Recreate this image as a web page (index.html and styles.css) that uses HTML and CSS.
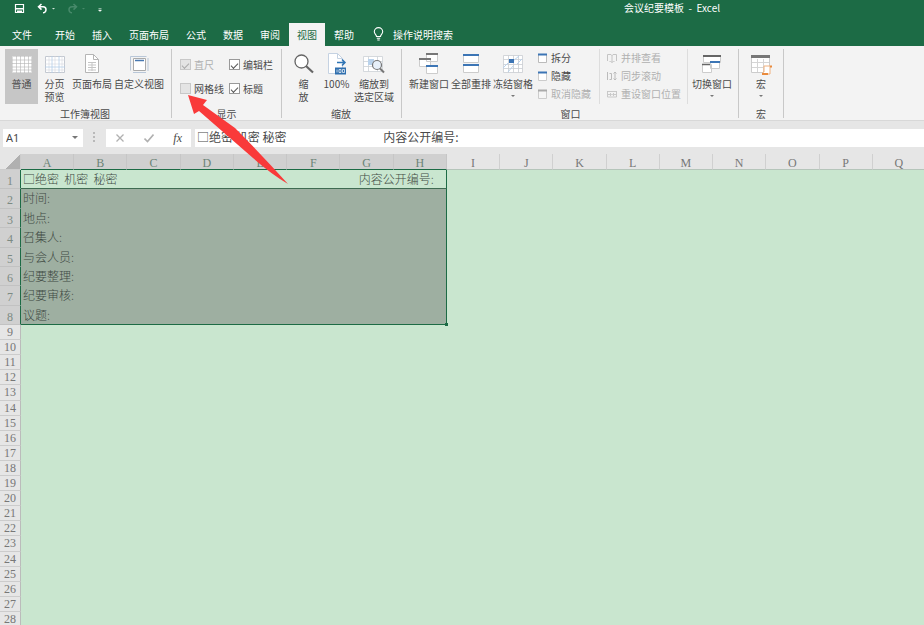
FILE: index.html
```html
<!DOCTYPE html>
<html lang="zh-CN">
<head>
<meta charset="utf-8">
<title>会议纪要模板 - Excel</title>
<link rel="stylesheet" href="styles.css">
</head>
<body>
<header class="titlebar">
  <div class="quick">
    <button aria-label="保存"><svg width="11" height="11" viewBox="0 0 11 11"><path d="M1.500 1.500h8v8h-8z" fill="none" stroke="#fff" stroke-width="1.200"/><path d="M1 5h9v1.500H1zM3 7.500h5V10H3z" fill="#fff"/></svg></button>
    <button aria-label="撤消"><svg width="20" height="11" viewBox="0 0 20 11"><path d="M4.500 1L1.500 3.800l3 2.800M1.500 3.800H6a3 3 0 0 1 0 6" fill="none" stroke="#fff" stroke-width="1.500"/><path d="M15 5h3l-1.500 1.500z" fill="#cfe3d8"/></svg></button>
    <button aria-label="恢复" disabled><svg width="20" height="11" viewBox="0 0 20 11"><path d="M6.500 1l3 2.800-3 2.800M9.500 3.800H5a3 3 0 0 0 0 6" fill="none" stroke="#47896a" stroke-width="1.500"/><path d="M15 5h3l-1.500 1.500z" fill="#47896a"/></svg></button>
    <button aria-label="自定义快速访问工具栏"><svg width="6" height="11" viewBox="0 0 6 11"><path d="M1.500 5.500h3M1.500 7h3L3 8.500z" fill="#fff" stroke="#fff" stroke-width=".5"/></svg></button>
  </div>
  <h1 class="doc">会议纪要模板 &nbsp;- &nbsp;Excel</h1>
</header>
<nav class="tabs">
  <button class="tab file">文件</button>
  <button class="tab">开始</button>
  <button class="tab">插入</button>
  <button class="tab">页面布局</button>
  <button class="tab">公式</button>
  <button class="tab">数据</button>
  <button class="tab">审阅</button>
  <button class="tab active">视图</button>
  <button class="tab">帮助</button>
  <button class="tab tell"><svg width="11" height="14" viewBox="0 0 11 14"><path d="M3.500 9.500C3.500 7.500 1.300 7 1.300 4.800a4.200 4.200 0 0 1 8.400 0C9.700 7 7.500 7.500 7.500 9.500zM3.800 11.300h3.400M4.300 13h2.400" fill="none" stroke="#fff" stroke-width="1.100"/></svg>操作说明搜索</button>
</nav>
<main>
<section class="ribbon">
  <div class="group">
    <div class="tools">
      <button class="big w33 on"><svg width="20" height="20" viewBox="0 0 20 20"><path d="M.5 2.500h19v16H.5z" fill="#fff" stroke="#ddd"/><path d="M0 6h20M0 9.500h20M0 13h20M0 16h20M4.500 2v17M8.500 2v17M12.500 2v17M16.500 2v17" stroke="#b4b4b4" stroke-width=".6"/></svg><span>普通</span></button>
      <button class="big w33"><svg width="20" height="20" viewBox="0 0 20 20"><path d="M.5 2.500h19v16H.5z" fill="#fff" stroke="#c3c8d0"/><path d="M0 6h20M0 10h20M0 16h20M4 2v17M10 2v17M17 2v17" stroke="#d3d7dd" stroke-width=".6"/><path d="M0 13h20M7 2v17M14 2v17" stroke="#b5cee8" stroke-width=".8"/></svg><span>分页<br>预览</span></button>
      <button class="big w42"><svg width="20" height="20" viewBox="0 0 20 20"><path d="M3.500.5h8l5 5v13h-13z" fill="#fff" stroke="#b5b5b5"/><path d="M11.500.5v5h5" fill="none" stroke="#b5b5b5"/><path d="M6 8.500h8M6 11h8M6 13.500h8M6 16h8M10 8v9" stroke="#c5c5c5"/></svg><span>页面布局</span></button>
      <button class="big w52"><svg width="20" height="20" viewBox="0 0 20 20"><path d="M1.500 16.500v-14h16M19 4v13M4 18.500h13" fill="none" stroke="#b9c7d8"/><path d="M4.500 4.500h12v12h-12z" fill="#fff" stroke="#aaa"/><path d="M6 6.500h9" stroke="#4878b0" stroke-width="1.500"/></svg><span>自定义视图</span></button>
    </div>
    <h2>工作簿视图</h2>
  </div>
  <div class="group show">
    <div class="checks">
      <label class="off"><input type="checkbox" checked disabled>直尺</label>
      <label><input type="checkbox" checked>编辑栏</label>
      <label><input type="checkbox" class="hover">网格线</label>
      <label><input type="checkbox" checked>标题</label>
    </div>
    <h2>显示</h2>
  </div>
  <div class="group zoom">
    <div class="tools">
      <button class="big w33"><svg width="20" height="20" viewBox="0 0 20 20"><circle cx="7.500" cy="7.500" r="6.500" fill="#fff" stroke="#666" stroke-width="1.300"/><path d="M12 12l7 6.500" stroke="#666" stroke-width="2.200"/></svg><span>缩<br>放</span></button>
      <button class="big w33"><svg width="20" height="20" viewBox="0 0 20 20"><path d="M1.500-.5h9l5 5v15h-14z" fill="#fff" stroke="#c5d2e2"/><path d="M10.500-.5v5h5" fill="none" stroke="#c5d2e2"/><path d="M10 8.500h8M15 5.500l3 3-3 3" fill="none" stroke="#2f75b5" stroke-width="1.500"/><path d="M8 13.500h11v7H8z" fill="#2f6fae"/><path d="M10 15.500v3M12 15.500h2v3h-2zM15.500 15.500h2v3h-2z" fill="none" stroke="#fff" stroke-width=".7"/></svg><span>100%</span></button>
      <button class="big w42"><svg width="22" height="20" viewBox="0 0 22 20"><path d="M.5 2.500h19v15H.5zM.5 7.500h19M.5 12.500h19M5.500 2.500v15M14.500 2.500v15" fill="#fff" stroke="#cbd0d6" stroke-width=".8"/><path d="M5 5h6v6H5z" fill="#b9d2eb"/><circle cx="14" cy="11" r="4.500" fill="#e7f0f9" stroke="#777" stroke-width="1.200"/><path d="M17 14.500L21 18.500" stroke="#777" stroke-width="2"/></svg><span>缩放到<br>选定区域</span></button>
    </div>
    <h2>缩放</h2>
  </div>
  <div class="group window">
    <div class="tools">
      <button class="big w42"><svg width="20" height="20" viewBox="0 0 20 20"><path d="M7.500-.5h11v8h-11zM.5 4.500h11v8H.5z" fill="#fff" stroke="#ccc"/><path d="M7 0h12M0 5h12" stroke="#777" stroke-width="2"/><path d="M7.500 11.500h11v8h-11z" fill="#fff" stroke="#ccc"/><path d="M7 12h12" stroke="#3c75b5" stroke-width="2"/></svg><span>新建窗口</span></button>
      <button class="big w42"><svg width="20" height="20" viewBox="0 0 20 20"><path d="M2.500.5h15v8h-15zM2.500 10.500h15v8h-15z" fill="#fff" stroke="#ccc"/><path d="M2 1h16M2 11h16" stroke="#3c75b5" stroke-width="2"/></svg><span>全部重排</span></button>
      <button class="big w42"><svg width="22" height="20" viewBox="0 0 22 20"><path d="M1.500 1.500h19v17h-19zM1.500 5.500h19M1.500 10.500h19M1.500 14.500h19M6.500 1.500v17M11.500 1.500v17M16.500 1.500v17" fill="#fff" stroke="#c9cdd2" stroke-width=".8"/><path d="M1 14l5-5M11 7l6-5M6 18l5-6M15 10l5-5" stroke="#b9d2ec"/><path d="M7 5h5v4H7z" fill="#3c75b5"/></svg><span>冻结窗格</span><i class="caret"></i></button>
      <div class="list">
        <button><svg width="9" height="10" viewBox="0 0 9 10"><path d="M.5 1.500h8v8h-8z" fill="#fff" stroke="#bbb"/><path d="M0 1.500h9" stroke="#3c75b5" stroke-width="2"/></svg>拆分</button>
        <button><svg width="9" height="10" viewBox="0 0 9 10"><path d="M.5 1.500h8v8h-8z" fill="#fff" stroke="#ccc"/><path d="M0 1.500h9" stroke="#3c75b5" stroke-width="2"/></svg>隐藏</button>
        <button disabled><svg width="9" height="10" viewBox="0 0 9 10"><path d="M.5 1.500h8v8h-8z" fill="#f5f5f5" stroke="#ccc"/><path d="M0 1.500h9" stroke="#aaa" stroke-width="2"/></svg>取消隐藏</button>
      </div>
      <div class="list ruled">
        <button disabled><svg width="10" height="10" viewBox="0 0 10 10"><path d="M5 2v7M.5 8V1.500H4l1 1 1-1h3.500V8M2.500 8.500h1l1.500 1M7.500 8.500h-1L5 9.500" fill="none" stroke="#c4c4c4"/></svg>并排查看</button>
        <button disabled><svg width="10" height="10" viewBox="0 0 10 10"><path d="M.5 1v8M2.500 2.500h2v6h-2M8 1v8M6.500 2.500L8 1l1.500 1.500M6.500 7.500L8 9l1.500-1.500" fill="none" stroke="#bbb"/></svg>同步滚动</button>
        <button disabled><svg width="10" height="10" viewBox="0 0 10 10"><path d="M.5 2v6M9.500 2v6M.5 2.500h9M.5 8h9M1 5.500h3M6 5.500h3M3 4l1.500 1.500L3 7M7 4L5.500 5.500 7 7" fill="none" stroke="#c4c4c4" stroke-width=".9"/></svg>重设窗口位置</button>
      </div>
      <button class="big w42"><svg width="20" height="20" viewBox="0 0 20 20"><path d="M1.500 1.500h17v7h-17zM.5 10.500h9v8h-9zM8.500 7.500h9v7h-9z" fill="#fff" stroke="#ccc"/><path d="M1 2h18" stroke="#666" stroke-width="2"/><path d="M0 10.500h8" stroke="#666" stroke-width="1.500"/><path d="M8 8h10" stroke="#3c75b5" stroke-width="2"/></svg><span>切换窗口</span><i class="caret"></i></button>
    </div>
    <h2>窗口</h2>
  </div>
  <div class="group macro">
    <div class="tools">
      <button class="big w42"><svg width="22" height="20" viewBox="0 0 22 20"><path d="M1.500 1.500h18v17h-18z" fill="#fff" stroke="#ccc"/><path d="M1 2.500h19" stroke="#777" stroke-width="3"/><path d="M2 8.500h17M2 13.500h17M7.500 5v13M13.500 5v13" stroke="#d5d5d5"/><path d="M14 12h6v8h-7v-2h1z" fill="#fff" stroke="#f0b07c"/><path d="M20 12.500h2M12 20h6" stroke="#e98a3c" stroke-width="2"/></svg><span>宏</span><i class="caret"></i></button>
    </div>
    <h2>宏</h2>
  </div>
</section>
<section class="formula">
  <div class="namebox"><input aria-label="名称框" value="A1"><i class="caret"></i></div>
  <svg class="grip" width="2" height="11" viewBox="0 0 2 11"><path d="M1 0v2M1 4v2M1 8v2" stroke="#aaa" stroke-width="1.500"/></svg>
  <div class="actions">
    <button aria-label="取消"><svg width="10" height="10" viewBox="0 0 10 10"><path d="M1.500 1.500l7 7M8.500 1.500l-7 7" stroke="#b0b0b0" stroke-width="1.300"/></svg></button>
    <button aria-label="输入"><svg width="10" height="10" viewBox="0 0 10 10"><path d="M.5 5.500l3 3 6-7" fill="none" stroke="#b0b0b0" stroke-width="1.600"/></svg></button>
    <button class="fx">fx</button>
  </div>
  <input class="content" aria-label="编辑栏" value="□绝密 机密 秘密                                    内容公开编号:">
</section>
<table class="sheet">
  <thead>
    <tr><th class="corner"></th><th class="sel">A</th><th class="sel">B</th><th class="sel">C</th><th class="sel">D</th><th class="sel">E</th><th class="sel">F</th><th class="sel">G</th><th class="sel">H</th><th>I</th><th>J</th><th>K</th><th>L</th><th>M</th><th>N</th><th>O</th><th>P</th><th>Q</th></tr>
  </thead>
  <tbody class="filled">
    <tr><th>1</th><td class="first"><span>□绝密  机密  秘密</span><span>内容公开编号:</span></td></tr>
    <tr><th>2</th><td>时间:</td></tr>
    <tr><th>3</th><td>地点:</td></tr>
    <tr><th>4</th><td>召集人:</td></tr>
    <tr><th>5</th><td>与会人员:</td></tr>
    <tr><th>6</th><td>纪要整理:</td></tr>
    <tr><th>7</th><td>纪要审核:</td></tr>
    <tr><th>8</th><td class="last">议题:</td></tr>
  </tbody>
  <tbody class="empty">
    <tr><th>9</th></tr><tr><th>10</th></tr><tr><th>11</th></tr><tr><th>12</th></tr><tr><th>13</th></tr>
    <tr><th>14</th></tr><tr><th>15</th></tr><tr><th>16</th></tr><tr><th>17</th></tr><tr><th>18</th></tr>
    <tr><th>19</th></tr><tr><th>20</th></tr><tr><th>21</th></tr><tr><th>22</th></tr><tr><th>23</th></tr>
    <tr><th>24</th></tr><tr><th>25</th></tr><tr><th>26</th></tr><tr><th>27</th></tr><tr><th>28</th></tr>
  </tbody>
</table>
</main>
<svg class="arrow" width="100" height="90" viewBox="0 0 100 90"><path d="M0 0L19 5L15 10L47 33Q74 60 100 89Q82 78 65 63L11 16L6 19Z" fill="#f93a3a"/></svg>
</body>
</html>
```
FILE: styles.css
```css
* { box-sizing: border-box; }
html, body { height: 100%; }
body {
  margin: 0;
  overflow: hidden;
  position: relative;
  display: flex;
  flex-direction: column;
  background: #c9e6cf;
  color: #4a4a4a;
  font: 10px/13px "Noto Sans CJK SC", sans-serif;
}
button, input { font: inherit; color: inherit; border: 0; padding: 0; margin: 0; background: none; }
button svg { display: block; flex: none; }
h1, h2 { margin: 0; font-size: 10px; font-weight: 400; }
main { flex: 1; min-height: 0; }

.titlebar { display: flex; height: 22px; background: #1c6b45; color: #fff; padding-left: 14px; align-items: flex-start; }
.quick { display: flex; flex: 1; gap: 12px; padding-top: 3px; }
.quick button + button + button { margin-left: -2px; }
.doc { width: 300px; padding-top: 1px; }

.tabs { display: flex; gap: 1px; height: 24px; background: #1c6b45; padding-left: 4px; }
.tab { color: #fff; padding: 0 8px; }
.tab.file { margin-right: 6px; }
.tab.active { background: #f3f3f3; color: #1c6b45; margin-top: 1px; }
.tab.tell { display: flex; align-items: center; gap: 9px; padding-left: 10px; }

.ribbon { display: flex; height: 75px; background: #f3f3f3; padding: 3px 0 0 5px; border-bottom: 1px solid #d8d8d8; }
.group { display: flex; flex-direction: column; border-right: 1px solid #c8c8c8; margin-bottom: 2px; padding-right: 6px; }
.group h2 { text-align: center; margin-top: 3px; }
.tools, .checks { flex: none; height: 55px; }
.tools { display: flex; }
.big { display: flex; flex-direction: column; align-items: center; padding-top: 5px; white-space: nowrap; }
.big svg { margin-bottom: 3px; height: 20px; overflow: visible; }
.big.on { background: #c6c6c6; }
.w33 { width: 33px; }
.w42 { width: 42px; }
.w52 { width: 52px; }
.caret { border: 2px solid transparent; border-top-color: #777; border-bottom: 0; margin-top: 5px; }
.show { padding: 0 8px; }
.checks { display: grid; grid-template-columns: auto auto; gap: 11px 5px; align-content: center; }
.checks label { display: flex; align-items: center; gap: 3px; }
.checks .off { color: #b0b0b0; }
.checks input { appearance: none; width: 11px; height: 11px; border: 1px solid #999; background: #fff; display: grid; place-items: center; }
.checks input:checked::after { content: ""; width: 6px; height: 3px; border: 1px solid #555; border-width: 0 0 1px 1px; transform: rotate(-45deg); }
.checks input:disabled, .checks .hover { border-color: #c8c8c8; background: #e4e4e4; }
.checks input:disabled::after { border-color: #aaa; }
.zoom { padding-left: 5px; padding-right: 6px; }
.window { padding-left: 6px; padding-right: 5px; }
.list { display: flex; flex-direction: column; gap: 5px; padding: 2px 8px 0 4px; }
.list.ruled { border: 1px solid #ddd; border-width: 0 1px; padding: 2px 6px 0 7px; margin-right: 3px; }
.list button { display: flex; align-items: center; gap: 4px; white-space: nowrap; }
.list button:disabled { color: #b0b0b0; }
.macro { padding: 0 1px; }

.formula { display: flex; align-items: center; height: 33px; padding-left: 3px; background: #e6e6e6; }
.namebox, .actions { display: flex; align-items: center; height: 18px; background: #fff; }
.namebox { width: 80px; padding: 0 5px 0 3px; }
.namebox input { flex: 1; min-width: 0; font: 11px/14px "Noto Sans", sans-serif; }
.namebox .caret { margin: 0; border-width: 3px 3px 0; }
.grip { margin: 0 11px 0 10px; }
.actions { width: 85px; justify-content: space-between; padding: 0 9px; margin-right: 4px; }
.fx { font: italic 12px/14px "Liberation Serif", serif; }
.content { flex: 1; min-width: 0; height: 18px; background: #fff; padding: 0 2px 2px; font-size: 12px; }

.sheet, .sheet thead, .sheet tbody { display: grid; }
.sheet { width: calc(100% + 2px); }
.sheet tr { display: grid; grid-template: minmax(0, 1fr) / 21px repeat(17, 1fr); min-height: 0; }
.sheet th { font: 12px/14px "Liberation Serif", serif; color: #777; text-align: center; padding: 0; min-height: 0; }
.sheet thead { height: 16px; background: #e6e6e6; }
.sheet thead th { border-right: 1px solid #d0d0d0; border-bottom: 1px solid #b5c5ba; line-height: 18px; }
.sheet thead .sel { background: #d0d0d0; border-right-color: #c6c6c6; border-bottom-color: #1c6b45; color: #6b8376; }
.sheet thead .corner { background: linear-gradient(135deg, #e6e6e6 60%, #b0b0b0 60%); border-color: #ccc; }
.sheet tbody tr > th { border-right: 1px solid #bbb; border-bottom: 1px solid #ccc; background: #e6e6e6; }
.filled { height: 155px; grid-auto-rows: minmax(0, 1fr); }
.sheet .filled th { background: #d0d0d0; border-bottom-color: #c2c2c2; border-right-color: #1c6b45; color: #7c8a83; padding-top: 4px; }
.filled td { grid-column: 2 / 10; min-height: 0; background: #9eafa1; border-right: 1px solid #1c6b45; padding: 0 2px; color: #3f4a43; font-size: 12px; font-weight: 300; line-height: 18px; white-space: pre; }
.filled .first { display: flex; justify-content: space-between; background: #c9e6cf; border-bottom: 1px solid #3f6b52; padding-right: 12px; }
.filled .last { border-bottom: 1px solid #1c6b45; position: relative; }
.filled .last::after { content: ""; position: absolute; right: -2px; bottom: -2px; width: 3px; height: 3px; background: #1c6b45; }
.empty { height: 302px; grid-auto-rows: minmax(0, 1fr); }
.arrow { position: absolute; left: 188px; top: 95px; }
```
